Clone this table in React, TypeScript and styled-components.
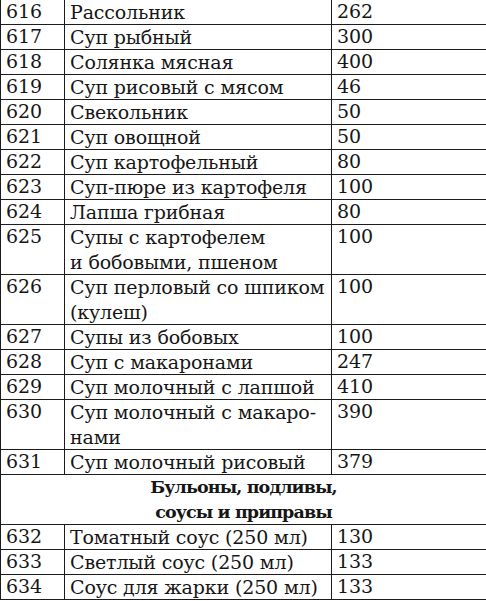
import styled, { createGlobalStyle } from "styled-components";

const GlobalStyle = createGlobalStyle`
  html, body {
    margin: 0;
    padding: 0;
    background: #fff;
  }
`;

type Row = { no: string; name: string[]; value: string };

const soups: Row[] = [
  { no: "616", name: ["Рассольник"], value: "262" },
  { no: "617", name: ["Суп рыбный"], value: "300" },
  { no: "618", name: ["Солянка мясная"], value: "400" },
  { no: "619", name: ["Суп рисовый с мясом"], value: "46" },
  { no: "620", name: ["Свекольник"], value: "50" },
  { no: "621", name: ["Суп овощной"], value: "50" },
  { no: "622", name: ["Суп картофельный"], value: "80" },
  { no: "623", name: ["Суп-пюре из картофеля"], value: "100" },
  { no: "624", name: ["Лапша грибная"], value: "80" },
  { no: "625", name: ["Супы с картофелем", "и бобовыми, пшеном"], value: "100" },
  { no: "626", name: ["Суп перловый со шпиком", "(кулеш)"], value: "100" },
  { no: "627", name: ["Супы из бобовых"], value: "100" },
  { no: "628", name: ["Суп с макаронами"], value: "247" },
  { no: "629", name: ["Суп молочный с лапшой"], value: "410" },
  { no: "630", name: ["Суп молочный с макаро-", "нами"], value: "390" },
  { no: "631", name: ["Суп молочный рисовый"], value: "379" },
];

const sauces: Row[] = [
  { no: "632", name: ["Томатный соус (250 мл)"], value: "130" },
  { no: "633", name: ["Светлый соус (250 мл)"], value: "133" },
  { no: "634", name: ["Соус для жарки (250 мл)"], value: "133" },
];

export default function App() {
  const renderRow = (r: Row) => (
    <tr key={r.no}>
      <Cell>{r.no}</Cell>
      <Cell>
        {r.name.map((line, i) => (
          <Line key={i}>{line}</Line>
        ))}
      </Cell>
      <Cell>{r.value}</Cell>
    </tr>
  );

  return (
    <>
      <GlobalStyle />
      <Table>
        <colgroup>
          <col style={{ width: 64 }} />
          <col style={{ width: 267 }} />
          <col style={{ width: 155 }} />
        </colgroup>
        <tbody>
          {soups.map(renderRow)}
          <tr>
            <SectionCell colSpan={3}>
              <Line>Бульоны, подливы,</Line>
              <Line>соусы и приправы</Line>
            </SectionCell>
          </tr>
          {sauces.map(renderRow)}
        </tbody>
      </Table>
    </>
  );
}

const Table = styled.table`
  width: 486px;
  table-layout: fixed;
  border-collapse: collapse;
  font-family: "DejaVu Serif", serif;
  font-size: 19px;
  letter-spacing: -0.15px;
  color: #161616;
  margin-top: -1px;
`;

const Cell = styled.td`
  border: 1px solid #1c1c1c;
  padding: 0 0 0 5px;
  height: 24px;
  vertical-align: top;
  white-space: nowrap;
  overflow: hidden;
`;

const SectionCell = styled(Cell)`
  text-align: center;
  font-weight: bold;
  font-size: 17.5px;
  letter-spacing: -0.9px;
  padding: 0;
`;

const Line = styled.div`
  line-height: 24px;
  height: 24px;

  & + & {
    margin-top: 1px;
  }
`;
